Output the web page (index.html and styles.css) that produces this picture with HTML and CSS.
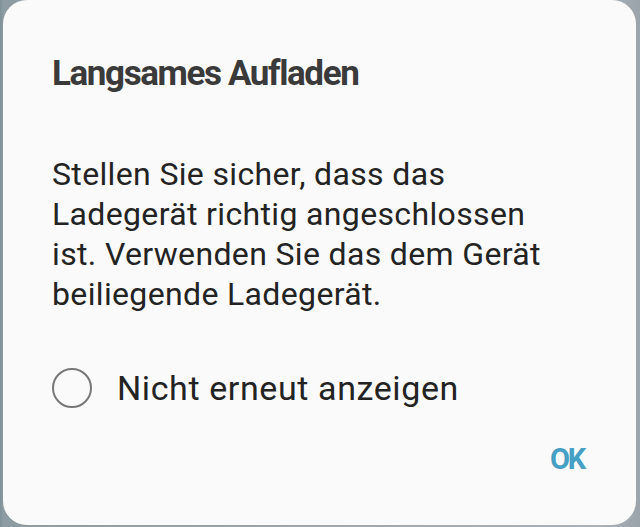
FILE: index.html
```html
<!DOCTYPE html>
<html>
<head>
<meta charset="utf-8">
<link rel="stylesheet" href="styles.css">
</head>
<body>
<div class="backdrop">
  <div class="dialog">
    <h1 class="title">Langsames Aufladen</h1>
    <p class="message">Stellen Sie sicher, dass das Ladegerät richtig angeschlossen ist. Verwenden Sie das dem Gerät beiliegende Ladegerät.</p>
    <label class="option">
      <span class="radio"></span>
      <span class="option-text">Nicht erneut anzeigen</span>
    </label>
    <div class="actions">
      <span class="ok">OK</span>
    </div>
  </div>
</div>
</body>
</html>
```
FILE: styles.css
```css
html, body {
  margin: 0;
  padding: 0;
  width: 640px;
  height: 527px;
  overflow: hidden;
}
.backdrop {
  width: 640px;
  height: 527px;
  background: linear-gradient(90deg, #7d9298 0px, #8c9ca2 3px, #aab2b8 600px, #9aa4aa 640px);
  padding: 0 4px 2px 3px;
  box-sizing: border-box;
}
.dialog {
  height: 525px;
  background: #fafafa;
  border-radius: 24px;
  box-sizing: border-box;
  padding: 0 51px 0 49px;
  display: flex;
  flex-direction: column;
  font-family: Roboto, "Noto Sans", sans-serif;
}
.title {
  margin: 54px 0 0 0;
  font-size: 35px;
  font-weight: 700;
  color: #3a3a3a;
  line-height: 40px;
  letter-spacing: -1.4px;
}
.message {
  margin: 60px 20px 0 0;
  font-size: 32px;
  line-height: 40px;
  color: #232323;
  letter-spacing: 0.35px;
}
.option {
  margin-top: 53px;
  display: flex;
  align-items: center;
  gap: 25px;
  height: 41px;
}
.radio {
  width: 36px;
  height: 36px;
  border: 2.5px solid #777;
  border-radius: 50%;
  flex: none;
}
.option-text {
  font-size: 34px;
  line-height: 40px;
  color: #232323;
  letter-spacing: 0.6px;
}
.actions {
  margin-top: 33px;
  display: flex;
  justify-content: flex-end;
}
.ok {
  font-size: 29px;
  line-height: 36px;
  font-weight: 700;
  color: #45a0c4;
  letter-spacing: -2.2px;
  margin-right: 1px;
}
```
